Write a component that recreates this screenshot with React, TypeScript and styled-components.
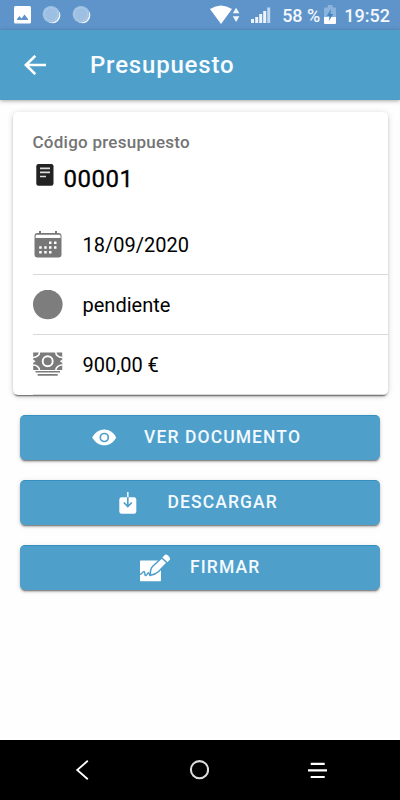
import React from "react";
import styled, { createGlobalStyle } from "styled-components";

const GlobalStyle = createGlobalStyle`
  * { box-sizing: border-box; }
  body { margin: 0; background: #fff; font-family: Roboto, "Liberation Sans", sans-serif; }
  svg { display: block; flex: none; }
`;

const Screen = styled.div`
  display: flex;
  flex-direction: column;
  width: 400px;
  height: 800px;
  overflow: hidden;
  background: #fefefe;
`;

const StatusBar = styled.header`
  display: flex;
  align-items: center;
  justify-content: space-between;
  height: 30px;
  flex: none;
  padding: 0 10px 0 14px;
  background: #5f94ca;
  color: #f4f8fd;
  font-size: 18px;
  font-weight: 500;
`;

const StatusGroup = styled.div<{ $gap: number }>`
  display: flex;
  align-items: center;
  gap: ${({ $gap }) => $gap}px;
`;

const StatusText = styled.span`
  line-height: 30px;
  padding-top: 2px;
  white-space: nowrap;
`;

const Toolbar = styled.div`
  display: flex;
  align-items: center;
  gap: 44px;
  height: 70px;
  flex: none;
  padding: 0 24px;
  background: #4f9fcb;
  box-shadow: 0 1px 4px rgba(0, 0, 0, 0.35);
`;

const Title = styled.h1`
  margin: 0;
  color: #f8fcff;
  font-size: 24px;
  font-weight: 500;
  line-height: 30px;
  letter-spacing: 0.8px;
`;

const Content = styled.main`
  display: flex;
  flex: 1;
  flex-direction: column;
  padding-top: 12px;
`;

const Card = styled.section`
  height: 283px;
  margin: 0 12px 20px 12.5px;
  border-radius: 5px;
  background: #fff;
  overflow: hidden;
  box-shadow: 0 3px 1px -2px rgba(0, 0, 0, 0.4), 0 2px 2px 0 rgba(0, 0, 0, 0.18), 0 1px 6px 0 rgba(0, 0, 0, 0.16);
`;

const CardHeader = styled.div`
  height: 103px;
  padding: 20px 20px 0;
`;

const Label = styled.div`
  color: #747474;
  font-size: 17px;
  font-weight: 500;
  line-height: 20px;
  letter-spacing: 0.25px;
`;

const Code = styled.div`
  display: flex;
  gap: 10px;
  padding: 12px 0 0 3px;
  color: #000;
  font-size: 24px;
  line-height: 30px;
  letter-spacing: 0.5px;
  -webkit-text-stroke: 0.3px #000;
`;

const Row = styled.div`
  display: flex;
  align-items: center;
  gap: 20px;
  height: 60px;
  margin-left: 20px;
  border-bottom: 1px solid #d9d9d9;
  color: #000;
  font-size: 20px;
`;

const Value = styled.span`
  line-height: 30px;
`;

const Actions = styled.div`
  display: flex;
  flex-direction: column;
  gap: 20px;
  padding: 0 20px;
`;

const ActionButton = styled.button<{ $gap: number; $inset: number }>`
  display: flex;
  align-items: center;
  gap: ${({ $gap }) => $gap}px;
  width: 360px;
  height: 45px;
  padding: 0 0 0 ${({ $inset }) => $inset}px;
  border: 0;
  border-top: 1px solid #3490bf;
  border-radius: 5px;
  background: #4f9fcb;
  color: #f4faff;
  font-family: inherit;
  font-size: 17.5px;
  font-weight: 500;
  letter-spacing: 1.1px;
  box-shadow: 0 3px 1px -2px rgba(0, 0, 0, 0.3), 0 2px 2px 0 rgba(0, 0, 0, 0.2), 0 1px 5px 0 rgba(0, 0, 0, 0.13);
`;

const ActionLabel = styled.span`
  line-height: 20px;
  margin-top: -2px;
`;

const NavBar = styled.nav`
  display: flex;
  align-items: center;
  justify-content: space-between;
  height: 60px;
  flex: none;
  padding: 0 72px 0 75px;
  background: #000;
`;

const PictureIcon = () => (
  <svg width="17" height="18" viewBox="0 0 17 18">
    <rect width="17" height="17.5" rx="1.5" fill="#fff" />
    <path d="M3 14v-1l2.5-3 2 2.5 3-4L14 13v1z" fill="#5f94ca" />
  </svg>
);

const CoinIcon = () => (
  <svg width="20" height="20" viewBox="0 0 20 20">
    <circle cx="10.5" cy="10.5" r="7.8" fill="#fff" />
    <circle cx="9" cy="9.3" r="8.4" fill="#9dbfe2" />
    <circle cx="9" cy="9.3" r="6.6" fill="none" stroke="#b9d2ec" strokeWidth="1.2" strokeDasharray="1 1.4" />
  </svg>
);

const WifiIcon = () => (
  <svg width="30" height="20" viewBox="0 0 30 20">
    <path d="M0 4Q11 -3 22 4L11 19z" fill="#fff" />
    <path d="M22.8 8.3h6.6L26.1 2.7zM22.8 11.3h6.6l-3.3 5.8z" fill="#f3f7fc" />
  </svg>
);

const SignalIcon = () => (
  <svg width="20" height="17" viewBox="0 0 20 17">
    <path d="M0 12h3v4H0zM4.2 10h3v6h-3zM8.2 7h3v9h-3zM12.2 4h3v12h-3z" fill="#edf4fb" />
    <path d="M16.2 0.5h3V16h-3z" fill="#c2d8ee" />
  </svg>
);

const BatteryIcon = () => (
  <svg width="13" height="20" viewBox="0 0 13 20">
    <path d="M1 2.5h2.8V0h4.8v2.5H11a1 1 0 0 1 1 1V12H0V3.5a1 1 0 0 1 1-1z" fill="#8bb4dd" />
    <path d="M0 12h12v6a1 1 0 0 1-1 1H1a1 1 0 0 1-1-1z" fill="#fff" />
    <path d="M7 4L2.8 11h2.7l-.7 5L9.3 9H6.5z" fill="#4585c5" />
  </svg>
);

const BackArrow = () => (
  <svg width="22" height="20" viewBox="0 0 22 20" fill="none" stroke="#fff" strokeWidth="2.7">
    <path d="M11.3 .9L1.9 10l9.4 9.1M2 10h20" />
  </svg>
);

const DocumentIcon = () => (
  <svg width="18" height="22" viewBox="0 0 18 22">
    <rect x=".3" y="0" width="17.2" height="21.8" rx="2.2" fill="#222" />
    <path d="M4 4.3h10M4 8.4h10M4 12.5h6" stroke="#ddd" strokeWidth="1.7" />
  </svg>
);

const CalendarIcon = () => (
  <svg width="30" height="30" viewBox="0 0 30 30">
    <path d="M6 1h2v2h14V1h2v2h1.5A3 3 0 0 1 28.5 6v18.5a3 3 0 0 1-3 3h-21a3 3 0 0 1-3-3V6a3 3 0 0 1 3-3H6z" fill="#777" />
    <path d="M4 4.7h22.2a1.3 1.3 0 0 1 1.3 1.3v2H2.6V6A1.3 1.3 0 0 1 4 4.7z" fill="#fff" />
    <path
      d="M16 11.4h2.5v2.5H16zM21 11.4h2.5v2.5H21zM6.2 16.2h2.5v2.5H6.2zM11.2 16.2h2.5v2.5h-2.5zM16 16.2h2.5v2.5H16zM21 16.2h2.5v2.5H21zM6.2 21h2.5v2.5H6.2zM11.2 21h2.5v2.5h-2.5zM16 21h2.5v2.5H16z"
      fill="#fff"
    />
  </svg>
);

const DotIcon = () => (
  <svg width="30" height="30" viewBox="0 0 30 30">
    <circle cx="14.8" cy="14.5" r="14.8" fill="#7d7d7d" />
  </svg>
);

const CashIcon = () => (
  <svg width="30" height="30" viewBox="0 0 30 30">
    <rect x=".2" y="2.5" width="29" height="17.5" fill="#7b7b7b" />
    <g fill="none" stroke="#fff" strokeWidth="1.6">
      <circle cx="14.7" cy="11.2" r="5" strokeWidth="1.9" />
      <path d="M6.5 2A6.3 5.3 0 0 1 0 7.5M22.8 2a6.3 5.3 0 0 0 6.5 5.5M6.5 20.5A6.3 5.3 0 0 0 0 15M22.8 20.5a6.3 5.3 0 0 1 6.5-5.5" />
    </g>
    <path d="M0 9.5L2.6 11.3 0 13.1zM29.4 9.5l-2.6 1.8 2.6 1.8z" fill="#fff" />
    <path d="M2.5 21.8h24.5" stroke="#7b7b7b" strokeWidth="1.6" />
    <path d="M4.7 24.9h20" stroke="#7b7b7b" strokeWidth="1.7" />
  </svg>
);

const EyeIcon = () => (
  <svg width="25" height="18" viewBox="0 0 25 18">
    <path d="M.2 8.5C3 3.2 7.4 .5 12.3 .5S21.6 3.2 24.2 8.5c-2.6 5.1-7 7.8-11.9 7.8S3 13.6.2 8.5z" fill="#fff" />
    <circle cx="12.3" cy="8.5" r="4" fill="#fff" stroke="#4f9fcb" strokeWidth="1.7" />
  </svg>
);

const DownloadIcon = () => (
  <svg width="18" height="23" viewBox="0 0 18 23">
    <rect x=".3" y="5.3" width="17" height="16.5" rx="2.4" fill="#fff" />
    <path d="M8.8 0V5.3" stroke="#e4f2fb" strokeWidth="1.7" />
    <path d="M8.8 5.3v8.4M4.8 10.5l4 4 4-4" fill="none" stroke="#4f9fcb" strokeWidth="1.7" />
  </svg>
);

const SignIcon = () => (
  <svg width="31" height="29" viewBox="0 0 31 29">
    <rect x="0" y="6.5" width="21" height="20.8" rx=".7" fill="#fff" />
    <path
      d="M0 20.3c2.2.4 2.6-3.2 4.1-2.9s.1 4.6 1.7 4.1 1.9-3.4 3-2.5 0 2.6 2.3 2.6"
      fill="none"
      stroke="#4f9fcb"
      strokeWidth="1.5"
    />
    <path d="M10.3 21.3c-.3-4.8.4-7 2.7-9.3L22.5 3.2l5.1 5-9 9.3c-2.3 2.3-4.5 3.2-8.3 3.8z" fill="#fff" stroke="#4f9fcb" strokeWidth="1.5" />
    <path d="M22.3 3.4L25 .7c1.4-1.1 5.7 2.3 5 4.9L27.4 8.3z" fill="#fff" />
    <path d="M21.7 4l5.4 5" stroke="#4f9fcb" strokeWidth="1.2" />
  </svg>
);

const NavBack = () => (
  <svg width="14" height="20" viewBox="0 0 14 20">
    <path d="M12.8 .8L2.2 10l10.6 9.2" fill="none" stroke="#fff" strokeWidth="1.8" />
  </svg>
);

const NavHome = () => (
  <svg width="20" height="20" viewBox="0 0 20 20">
    <circle cx="10.5" cy="9.7" r="8.6" fill="none" stroke="#ddd" strokeWidth="2.1" />
  </svg>
);

const NavRecent = () => (
  <svg width="20" height="18" viewBox="0 0 20 18">
    <path d="M2.7 2.8h14M0 9.3h19M2.7 16h14" stroke="#fff" strokeWidth="2.2" />
  </svg>
);

const details = [
  { icon: <CalendarIcon />, text: "18/09/2020" },
  { icon: <DotIcon />, text: "pendiente" },
  { icon: <CashIcon />, text: "900,00 €" },
];

const actions = [
  { icon: <EyeIcon />, text: "VER DOCUMENTO", inset: 72, gap: 27 },
  { icon: <DownloadIcon />, text: "DESCARGAR", inset: 98.5, gap: 31 },
  { icon: <SignIcon />, text: "FIRMAR", inset: 119.5, gap: 19.5 },
];

export default function App() {
  return (
    <>
      <GlobalStyle />
      <Screen>
        <StatusBar>
          <StatusGroup $gap={11}>
            <PictureIcon />
            <StatusGroup $gap={10}>
              <CoinIcon />
              <CoinIcon />
            </StatusGroup>
          </StatusGroup>
          <StatusGroup $gap={7}>
            <StatusGroup $gap={11}>
              <WifiIcon />
              <SignalIcon />
              <StatusGroup $gap={4}>
                <StatusText>58 %</StatusText>
                <BatteryIcon />
              </StatusGroup>
            </StatusGroup>
            <StatusText>19:52</StatusText>
          </StatusGroup>
        </StatusBar>
        <Toolbar>
          <BackArrow />
          <Title>Presupuesto</Title>
        </Toolbar>
        <Content>
          <Card>
            <CardHeader>
              <Label>Código presupuesto</Label>
              <Code>
                <DocumentIcon />
                <span>00001</span>
              </Code>
            </CardHeader>
            {details.map((item) => (
              <Row key={item.text}>
                {item.icon}
                <Value>{item.text}</Value>
              </Row>
            ))}
          </Card>
          <Actions>
            {actions.map((item) => (
              <ActionButton key={item.text} $gap={item.gap} $inset={item.inset}>
                {item.icon}
                <ActionLabel>{item.text}</ActionLabel>
              </ActionButton>
            ))}
          </Actions>
        </Content>
        <NavBar>
          <NavBack />
          <NavHome />
          <NavRecent />
        </NavBar>
      </Screen>
    </>
  );
}
